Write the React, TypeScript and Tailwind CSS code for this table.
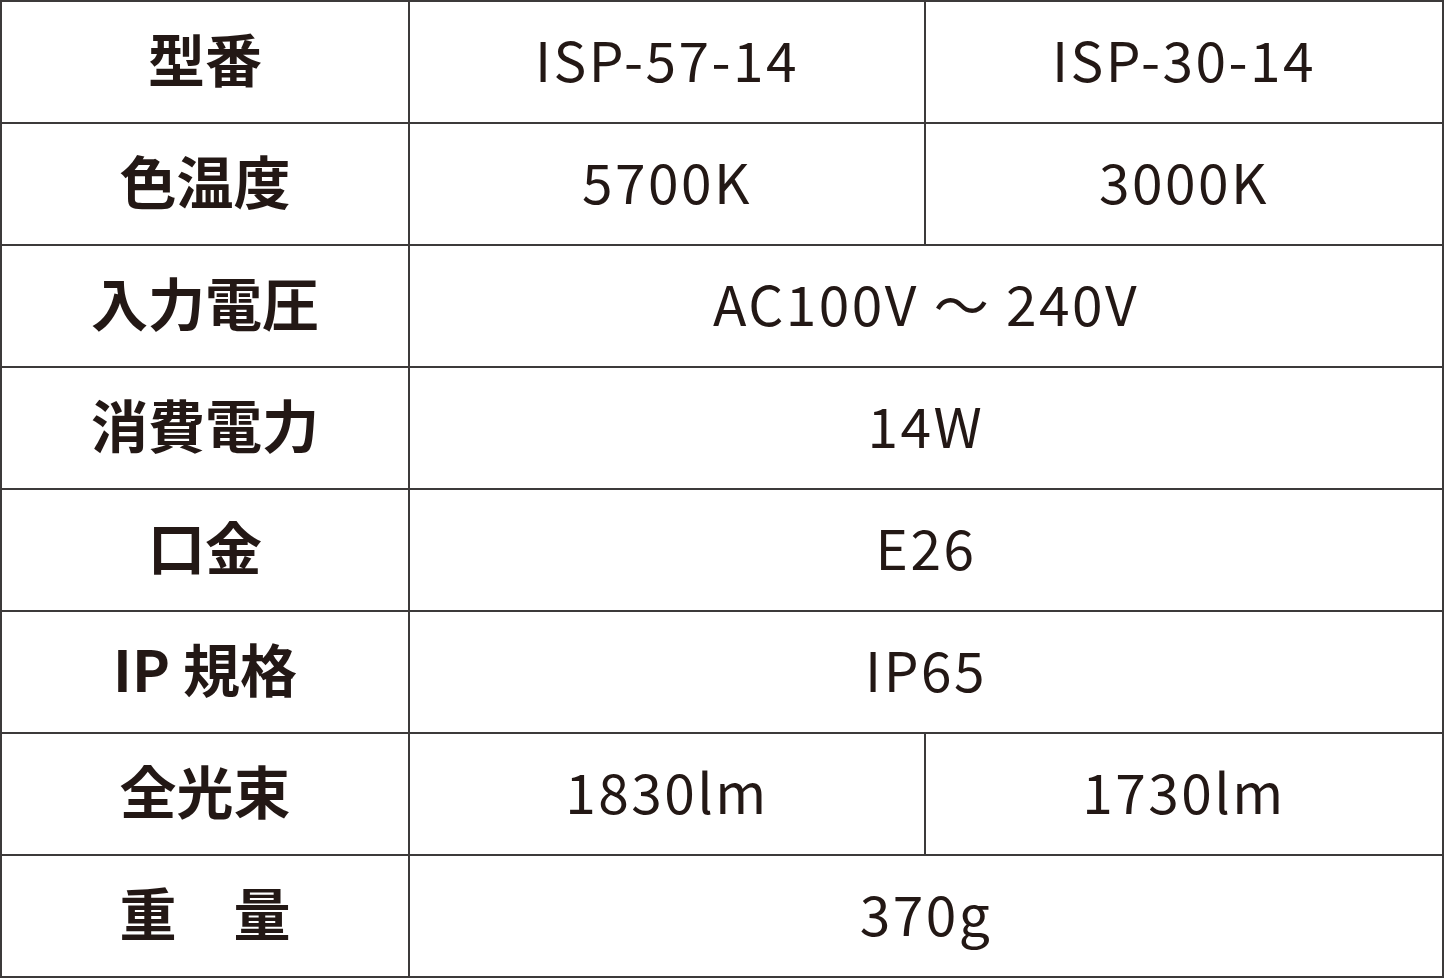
import React from 'react'

const font = '"Noto Sans CJK JP", "Noto Sans", sans-serif'

type Row = { label: string; values: string[] }

const rows: Row[] = [
  { label: '型番', values: ['ISP-57-14', 'ISP-30-14'] },
  { label: '色温度', values: ['5700K', '3000K'] },
  { label: '入力電圧', values: ['AC100V ～ 240V'] },
  { label: '消費電力', values: ['14W'] },
  { label: '口金', values: ['E26'] },
  { label: 'IP 規格', values: ['IP65'] },
  { label: '全光束', values: ['1830lm', '1730lm'] },
  { label: '重　量', values: ['370g'] },
]

const cell = 'bg-white flex items-center justify-center pb-2 text-[55px] text-[#231815] tracking-[0.045em]'

export default function App() {
  return (
    <div className="w-[1444px] h-[978px] bg-white" style={{ fontFamily: font }}>
      <div className="grid grid-cols-[406px_514px_516px] grid-rows-[repeat(8,120px)] gap-[2px] p-[2px] bg-[#3c3a3a]">
        {rows.map((row) => (
          <React.Fragment key={row.label}>
            {/* label */}
            <div className="bg-white flex items-center justify-center pb-2 text-[57px] font-bold text-[#231815] whitespace-pre">
              {row.label}
            </div>
            {row.values.length === 2 ? (
              <>
                <div className={cell}>{row.values[0]}</div>
                <div className={cell}>{row.values[1]}</div>
              </>
            ) : (
              <div className={'col-span-2 ' + cell}>{row.values[0]}</div>
            )}
          </React.Fragment>
        ))}
      </div>
    </div>
  )
}
